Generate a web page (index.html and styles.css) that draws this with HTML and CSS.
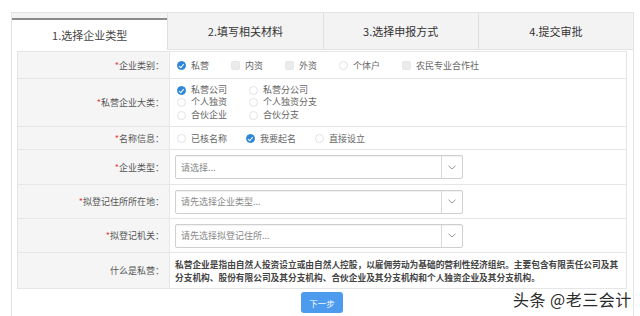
FILE: index.html
```html
<!DOCTYPE html>
<html lang="zh-CN">
<head>
  <meta charset="UTF-8">
  <meta name="viewport" content="width=device-width, initial-scale=1.0">
  <title>企业设立登记</title>
  <link rel="stylesheet" href="styles.css">
</head>
<body>
  <div class="wizard">
    <ul class="steps">
      <li class="active">1.选择企业类型</li>
      <li>2.填写相关材料</li>
      <li>3.选择申报方式</li>
      <li>4.提交审批</li>
    </ul>

    <div class="form">
      <div class="row r1">
        <div class="label"><i>*</i>企业类别：</div>
        <div class="field inline">
          <span class="opt"><b class="radio on"></b>私营</span>
          <span class="opt"><b class="radio off"></b>内资</span>
          <span class="opt"><b class="radio off"></b>外资</span>
          <span class="opt"><b class="radio"></b>个体户</span>
          <span class="opt"><b class="radio off"></b>农民专业合作社</span>
        </div>
      </div>
      <div class="row r2">
        <div class="label"><i>*</i>私营企业大类：</div>
        <div class="field grid2">
          <span class="opt"><b class="radio on"></b>私营公司</span>
          <span class="opt"><b class="radio"></b>私营分公司</span>
          <span class="opt"><b class="radio"></b>个人独资</span>
          <span class="opt"><b class="radio"></b>个人独资分支</span>
          <span class="opt"><b class="radio"></b>合伙企业</span>
          <span class="opt"><b class="radio"></b>合伙分支</span>
        </div>
      </div>
      <div class="row r3">
        <div class="label"><i>*</i>名称信息：</div>
        <div class="field inline wide">
          <span class="opt"><b class="radio"></b>已核名称</span>
          <span class="opt"><b class="radio on"></b>我要起名</span>
          <span class="opt"><b class="radio"></b>直接设立</span>
        </div>
      </div>
      <div class="row r4">
        <div class="label"><i>*</i>企业类型：</div>
        <div class="field">
          <div class="select"><span>请选择...</span><em><svg width="8" height="5" viewBox="0 0 8 5"><path d="M0.5 0.8 L4 4 L7.5 0.8" fill="none" stroke="#999" stroke-width="1"/></svg></em></div>
        </div>
      </div>
      <div class="row r5">
        <div class="label"><i>*</i>拟登记住所所在地：</div>
        <div class="field">
          <div class="select"><span>请先选择企业类型...</span><em><svg width="8" height="5" viewBox="0 0 8 5"><path d="M0.5 0.8 L4 4 L7.5 0.8" fill="none" stroke="#999" stroke-width="1"/></svg></em></div>
        </div>
      </div>
      <div class="row r6">
        <div class="label"><i>*</i>拟登记机关：</div>
        <div class="field">
          <div class="select"><span>请先选择拟登记住所...</span><em><svg width="8" height="5" viewBox="0 0 8 5"><path d="M0.5 0.8 L4 4 L7.5 0.8" fill="none" stroke="#999" stroke-width="1"/></svg></em></div>
        </div>
      </div>
      <div class="row r7">
        <div class="label">什么是私营：</div>
        <div class="field desc">私营企业是指由自然人投资设立或由自然人控股，以雇佣劳动为基础的营利性经济组织。主要包含有限责任公司及其分支机构、股份有限公司及其分支机构、合伙企业及其分支机构和个人独资企业及其分支机构。</div>
      </div>
    </div>

    <div class="actions">
      <button class="next">下一步</button>
    </div>
  </div>

  <div class="watermark">头条 @老三会计</div>
</body>
</html>
```

FILE: styles.css
```css
body {
  margin: 0;
  font-family: "Noto Sans CJK SC", "Liberation Sans", sans-serif;
  color: #555;
  background: #fff;
}

.wizard {
  margin: 12px 6px 0 11px;
  height: 304px;
  border: 1px solid #e4e4e4;
  border-bottom: none;
  box-sizing: border-box;
}

.steps {
  display: grid;
  grid-template-columns: repeat(4, 1fr);
  margin: 0;
  padding: 0;
  list-style: none;
  height: 36px;
  background: #f3f3f3;
  border-bottom: 1px solid #e4e4e4;
}
.steps li {
  display: flex;
  align-items: center;
  justify-content: center;
  font-size: 11px;
  color: #333;
  border-left: 1px solid #e0e0e0;
}
.steps li:first-child {
  border-left: none;
}
.steps li.active {
  margin-top: 5px;
  margin-bottom: -1px;
  background: #fff;
  border-top: 2px solid #8a8a8a;
  color: #444;
}

.form {
  margin: 1px 6px 0 5px;
  border: 1px solid #e6e6e6;
}

.row {
  display: grid;
  grid-template-columns: 152px 1fr;
  border-top: 1px solid #e6e6e6;
  font-size: 9px;
}
.row:first-child {
  border-top: none;
}
.r1 { height: 26px; }
.r2 { height: 47px; }
.r3 { height: 22px; }
.r4 { height: 34px; }
.r5 { height: 33px; }
.r6 { height: 33px; }
.r7 { height: 35px; }

.label {
  display: flex;
  align-items: center;
  justify-content: flex-end;
  padding-right: 5px;
  background: #f5f5f5;
  border-right: 1px solid #e6e6e6;
  color: #555;
}
.label i {
  font-style: normal;
  color: #e4393c;
}

.field {
  display: flex;
  align-items: center;
  padding-left: 5px;
  color: #666;
}
.field.inline .opt {
  margin-right: 20px;
}
.field.wide .opt {
  margin-right: 17px;
}
.field.grid2 {
  display: grid;
  grid-template-columns: 72px auto;
  align-content: center;
  row-gap: 0;
  line-height: 12.5px;
  justify-content: start;
}

.opt {
  display: inline-flex;
  align-items: center;
  padding-left: 2px;
}

.radio {
  display: inline-block;
  box-sizing: border-box;
  width: 9px;
  height: 9px;
  margin-right: 5px;
  border-radius: 50%;
  border: 1px solid #e2e2e2;
  background: #fff;
  position: relative;
}
.radio.off {
  border-radius: 2px;
  border-color: #e6e6e6;
  background: #ebebeb;
}
.radio.on {
  border-color: #2e86d6;
  background: #2e86d6;
}
.radio.on:after {
  content: "";
  position: absolute;
  left: 2px;
  top: 1px;
  width: 2px;
  height: 3.5px;
  border: solid #fff;
  border-width: 0 1.2px 1.2px 0;
  transform: rotate(40deg);
}

.select {
  display: flex;
  align-items: center;
  width: 288px;
  height: 24px;
  box-sizing: border-box;
  border: 1px solid #cfcfcf;
  border-radius: 2px;
  box-shadow: inset 0 1px 1px rgba(0, 0, 0, 0.06);
  background: #fff;
}
.select span {
  flex: 1;
  padding-left: 5px;
  color: #888;
}
.select em {
  display: flex;
  align-items: center;
  justify-content: center;
  width: 20px;
  height: 100%;
  border-left: 1px solid #d8d8d8;
}

.desc {
  display: block;
  padding: 5px 4px 0 5px;
  font-weight: bold;
  color: #444;
  line-height: 13px;
  font-size: 8.7px;
}

.actions {
  display: flex;
  justify-content: center;
  padding-top: 3px;
  padding-right: 1px;
}
.next {
  width: 42px;
  height: 21px;
  border: none;
  border-radius: 3px;
  background: #4c9bef;
  color: #fff;
  font-family: inherit;
  font-size: 8.5px;
  padding: 0;
}

.watermark {
  position: absolute;
  left: 513px;
  top: 287px;
  font-size: 16px;
  color: #2a2a2a;
  letter-spacing: 0.5px;
  text-shadow: 0 0 2px #fff;
}
```
